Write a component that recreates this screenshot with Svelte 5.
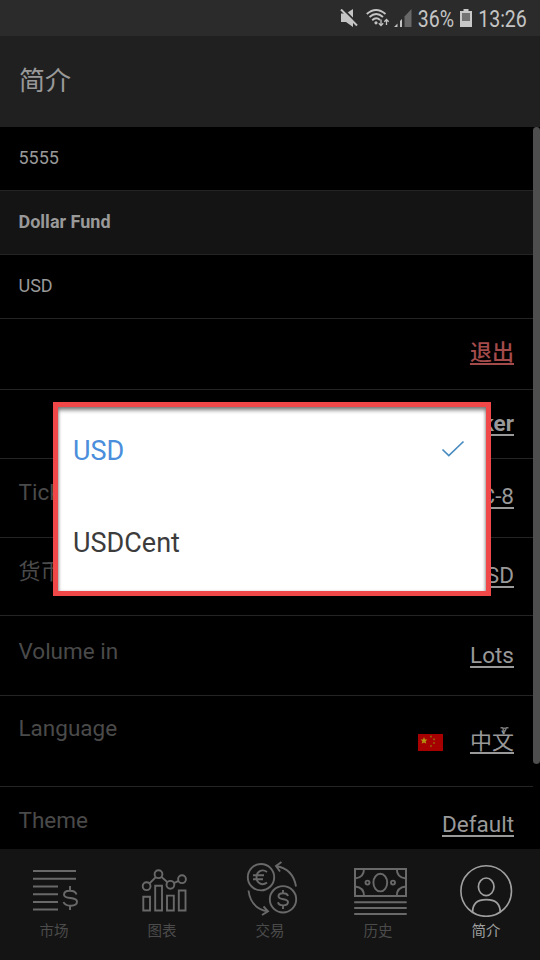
<script lang="ts">
  interface Setting {
    id: string
    label?: string
    value: string
  }

  const account = ['5555', 'Dollar Fund', 'USD']

  const settings: Setting[] = [
    { id: 'logout', value: '退出' },
    { id: 'broker', value: 'Broker' },
    { id: 'ticker', label: 'Ticker', value: 'UTC-8' },
    { id: 'currency', label: '货币', value: 'USD' },
    { id: 'volume', label: 'Volume in', value: 'Lots' },
    { id: 'language', label: 'Language', value: '中文' },
    { id: 'theme', label: 'Theme', value: 'Default' },
  ]

  const tabs = [
    { id: 'market', label: '市场' },
    { id: 'chart', label: '图表' },
    { id: 'trade', label: '交易' },
    { id: 'history', label: '历史' },
    { id: 'profile', label: '简介' },
  ]

  const currencies = ['USD', 'USDCent']

  let currency = $state('USD')
  let activeTab = $state('profile')
</script>

<div class="screen">
  <div class="status-bar">
    <svg class="mute" width="18" height="18" viewBox="0 0 18 18">
      <path d="M1 4.5h5L13 0v18l-7-5H1z" fill="#c4c4c4" />
      <path d="M2 -1L18.5 15.5" stroke="#2b2b2b" stroke-width="2" />
      <path d="M1 0.5L17 16.5" stroke="#c4c4c4" stroke-width="2" />
    </svg>
    <svg class="wifi" width="24" height="18" viewBox="0 0 24 18" fill="none" stroke="#c4c4c4">
      <path d="M0.8 5Q10 -3 19.5 5M3.5 8Q10.2 2 17 8M6.2 11.2Q10.2 7.5 14 11" stroke-width="1.9" />
      <circle cx="10" cy="13.8" r="1.6" fill="#c4c4c4" stroke="none" />
      <path d="M15 10.5v6M12.8 14.3l2.2 2.3 2.2-2.3M20.5 16v-5.5M18.3 12.8l2.2-2.3 2.2 2.3" stroke-width="1.3" />
    </svg>
    <svg class="signal" width="18" height="18" viewBox="0 0 18 18">
      <path d="M0 18l3.5-3.5V18zM6 12l2-2v8H6z" fill="#c4c4c4" />
      <path d="M10.5 7.5L17.5 0v18h-7z" fill="#686868" />
    </svg>
    <span class="percent">36%</span>
    <svg class="battery" width="12" height="18" viewBox="0 0 12 18">
      <path d="M3.5 0h5v2H12v16H0V2h3.5z" fill="#c8c8c8" />
      <path d="M2 4h8v8H2z" fill="#727272" />
    </svg>
    <span class="clock">13:26</span>
  </div>

  <header class="title-bar">简介</header>

  <main class="content">
    <div class="list">
      {#each account as line, i}
        <div class="account-row" class:shaded={i === 1}>{line}</div>
      {/each}
      {#each settings as item (item.id)}
        <div class="setting {item.id}">
          <span class="label">{item.label ?? ''}</span>
          {#if item.id === 'language'}
            <svg class="flag" width="25" height="17" viewBox="0 0 25 17">
              <path d="M0 0h25v17H0z" fill="#a60000" />
              <path d="M6 3l1 2.4 2.5 0.2-1.9 1.6 0.7 2.5L6 8.4 3.7 9.7l0.7-2.5-1.9-1.6 2.5-0.2z" fill="#b39312" />
              <g fill="#97590a">
                <circle cx="13" cy="2.6" r="1.1" />
                <circle cx="16" cy="5.3" r="1.1" />
                <circle cx="16" cy="9" r="1.1" />
                <circle cx="13" cy="12" r="1.1" />
              </g>
            </svg>
          {/if}
          <span class="value">
            {item.value}
            {#if item.id === 'language'}
              <svg class="caret" width="9" height="7" viewBox="0 0 9 7" fill="none" stroke="#777" stroke-width="1.4">
                <path d="M0.5 0.8h2L4.5 5l2-4.2h2M3 1.2h3" />
              </svg>
            {/if}
          </span>
        </div>
      {/each}
    </div>
    <div class="scroll-track"><div class="scroll-thumb"></div></div>
  </main>

  <nav class="tabs">
    {#each tabs as tab (tab.id)}
      <button class="tab {tab.id}" class:active={activeTab === tab.id} onclick={() => (activeTab = tab.id)}>
        <svg width="56" height="56" viewBox="0 0 56 56" fill="none" stroke="currentColor" stroke-width="1.9">
          {#if tab.id === 'market'}
            <path d="M7 10h43M7 17.8h43M7 25.5h25M7 33.2h25M7 41h25M7 48.5h25" stroke-width="2.1" />
            <path d="M44 25v5M44 44v5M50.5 33.5C49 28.5 38 28.5 38 33.8C38 39 51 35 51 40.5C51 46 39.5 46 37.5 41" />
          {:else if tab.id === 'chart'}
            <circle cx="12.6" cy="25.2" r="3.9" />
            <circle cx="24.5" cy="13.2" r="3.9" />
            <circle cx="36.4" cy="23.8" r="3.9" />
            <circle cx="48" cy="18.2" r="3.9" />
            <path d="M15.4 22.5l6.4-6.4M27.4 15.9l6.1 5.4M39.9 22.2l4.6-2.3" />
            <path d="M9.3 35.8h6.7v13.7H9.3zM21.2 24.7H28v24.8h-6.8zM33 34.6h6.8v14.9H33zM44.8 29.5h6.7v20h-6.7z" />
          {:else if tab.id === 'trade'}
            <circle cx="19" cy="16.2" r="13.2" />
            <circle cx="41" cy="38.3" r="13.2" />
            <path d="M25 11.1C20 7.3 14.5 10.6 14.5 16.3S20 25.3 25 21.5M11 14.3h11M11 18.3h10" />
            <path d="M41 29v3.5M41 44.5V48M46 35C45 31.3 36.5 31.3 36.5 35.2C36.5 39.5 46 37 46 41C46 45.3 37 45.5 36 41.2" />
            <path d="M54 25.5C52 13 45.5 7 34 5M39.5 1L34 5l4 5.5M6.5 29.5C8 41 14 48.5 26 50.2M21.5 45.5L26 50.2 20 54" />
          {:else if tab.id === 'history'}
            <path d="M3 8h51v27H3z" stroke-width="2" />
            <ellipse cx="28.3" cy="21.6" rx="6.9" ry="8.8" />
            <circle cx="15.5" cy="21.6" r="2" />
            <circle cx="41" cy="21.6" r="2" />
            <path d="M12 8c0 6-3 9-9 9.5M44.8 8c0 6 3 9 9 9.5M12 35c0-6-3-9-9-9.5M44.8 35c0-6 3-9 9-9.5" />
            <path d="M2.2 41.2h52.5M2.2 47h52.5M2.2 53h52.5" stroke-width="2.1" />
          {:else}
            <circle cx="28.2" cy="30" r="25.3" stroke-width="1.6" />
            <ellipse cx="28.2" cy="25.8" rx="7.8" ry="8.8" stroke-width="1.7" />
            <path d="M14.6 51C14.6 42.5 19 38.7 28.2 38.7s14 3.8 14 12.3" stroke-width="1.7" />
          {/if}
        </svg>
        <span>{tab.label}</span>
      </button>
    {/each}
  </nav>

  <div class="picker">
    {#each currencies as name}
      <button class="option" class:selected={currency === name} onclick={() => (currency = name)}>
        <span>{name}</span>
        {#if currency === name}
          <svg width="24" height="18" viewBox="0 0 24 18" fill="none" stroke="#4a8cc0" stroke-width="1.7">
            <path d="M1.5 9.5l6.3 6L22.5 1.5" />
          </svg>
        {/if}
      </button>
    {/each}
  </div>
</div>

<style>
  :global(body) {
    margin: 0;
    background: #000;
  }

  .screen {
    position: relative;
    display: flex;
    flex-direction: column;
    width: 540px;
    height: 960px;
    overflow: hidden;
    background: #000;
    color: #999;
    font-family: Roboto, 'Noto Sans CJK SC', sans-serif;
  }

  button {
    border: none;
    background: none;
    padding: 0;
    font-family: inherit;
  }

  .status-bar {
    box-sizing: border-box;
    display: flex;
    align-items: center;
    justify-content: flex-end;
    height: 36px;
    padding-right: 13px;
    background: #2b2b2b;
    color: #c4c4c4;
    font-size: 23px;
    flex-shrink: 0;
  }

  .mute {
    margin-right: 8px;
  }

  .wifi {
    margin-right: 4px;
  }

  .signal {
    margin-right: 6px;
  }

  .percent,
  .clock {
    display: flex;
    justify-content: center;
    width: 36px;
    line-height: 36px;
    padding-top: 3px;
    transform: scaleX(0.85);
  }

  .battery {
    margin: 0 6px 0 6px;
  }

  .clock {
    width: 49px;
  }

  .title-bar {
    box-sizing: border-box;
    height: 91px;
    padding: 0 19px;
    background: #202020;
    font-size: 26px;
    line-height: 90px;
    flex-shrink: 0;
  }

  .content {
    display: flex;
    height: 722px;
    overflow: hidden;
    flex-shrink: 0;
  }

  .list {
    width: 533px;
  }

  .account-row {
    box-sizing: border-box;
    height: 64px;
    padding-left: 18.5px;
    border-bottom: 1px solid #242424;
    font-size: 18px;
    line-height: 61px;
  }

  .account-row.shaded {
    background: #141414;
    font-weight: 700;
    line-height: 62px;
  }

  .setting {
    box-sizing: border-box;
    display: flex;
    align-items: center;
    height: 79px;
    padding: 0 19px 3px 18.5px;
    border-bottom: 1px solid #242424;
    font-size: 22.5px;
    line-height: 28px;
  }

  .label {
    flex: 1;
    padding-bottom: 8px;
    color: #4a4a4a;
  }

  .value {
    position: relative;
    text-decoration: underline;
    text-decoration-thickness: 1.5px;
    text-underline-offset: 2.5px;
  }

  .logout {
    height: 71px;
  }

  .logout .value {
    color: #a34b4b;
    font-size: 22px;
    font-weight: 500;
  }

  .broker {
    height: 69px;
  }

  .broker .value {
    font-weight: 700;
  }

  .ticker {
    height: 79px;
    padding-bottom: 4px;
  }

  .currency {
    height: 78px;
  }

  .currency .label {
    padding-bottom: 6px;
    font-size: 22px;
  }

  .volume {
    height: 80px;
    padding-bottom: 2px;
  }

  .language {
    height: 91px;
    padding-bottom: 0;
  }

  .language .label {
    padding-bottom: 26px;
  }

  .language .value {
    padding-top: 2px;
    font-size: 22px;
  }

  .theme {
    padding-bottom: 4px;
  }

  .flag {
    margin: 3px 27px 0 0;
  }

  .caret {
    position: absolute;
    right: 5px;
    top: 1px;
  }

  .scroll-track {
    width: 7px;
  }

  .scroll-thumb {
    height: 637px;
    border-radius: 4px;
    background: #4e4e4e;
  }

  .tabs {
    display: grid;
    grid-template-columns: repeat(5, 1fr);
    height: 111px;
    background: #141414;
  }

  .tab {
    display: flex;
    flex-direction: column;
    align-items: center;
    padding-top: 12px;
    color: #696969;
    font-size: 14.5px;
    line-height: 24px;
  }

  .tab.history svg {
    margin: 0 -2px 0 2px;
  }

  .tab span {
    padding-top: 3px;
    color: #4b4b4b;
  }

  .tab.active,
  .tab.active span {
    color: #a0a0a0;
  }

  .picker {
    position: absolute;
    left: 53px;
    top: 402px;
    box-sizing: border-box;
    width: 438px;
    height: 194px;
    border: 5px solid #f04848;
    background: #fff;
    box-shadow: inset 0 4px 4px -1px #777, inset 2px 0 3px -1px #bbb, inset -2px 0 3px -1px #bbb;
  }

  .option {
    display: flex;
    align-items: center;
    justify-content: space-between;
    width: 100%;
    height: 92px;
    padding: 0 21px 4px 15px;
    color: #3c3c3c;
    font-size: 27px;
  }

  .option svg {
    margin-bottom: 5px;
  }

  .option.selected {
    color: #4b8edb;
  }
</style>
